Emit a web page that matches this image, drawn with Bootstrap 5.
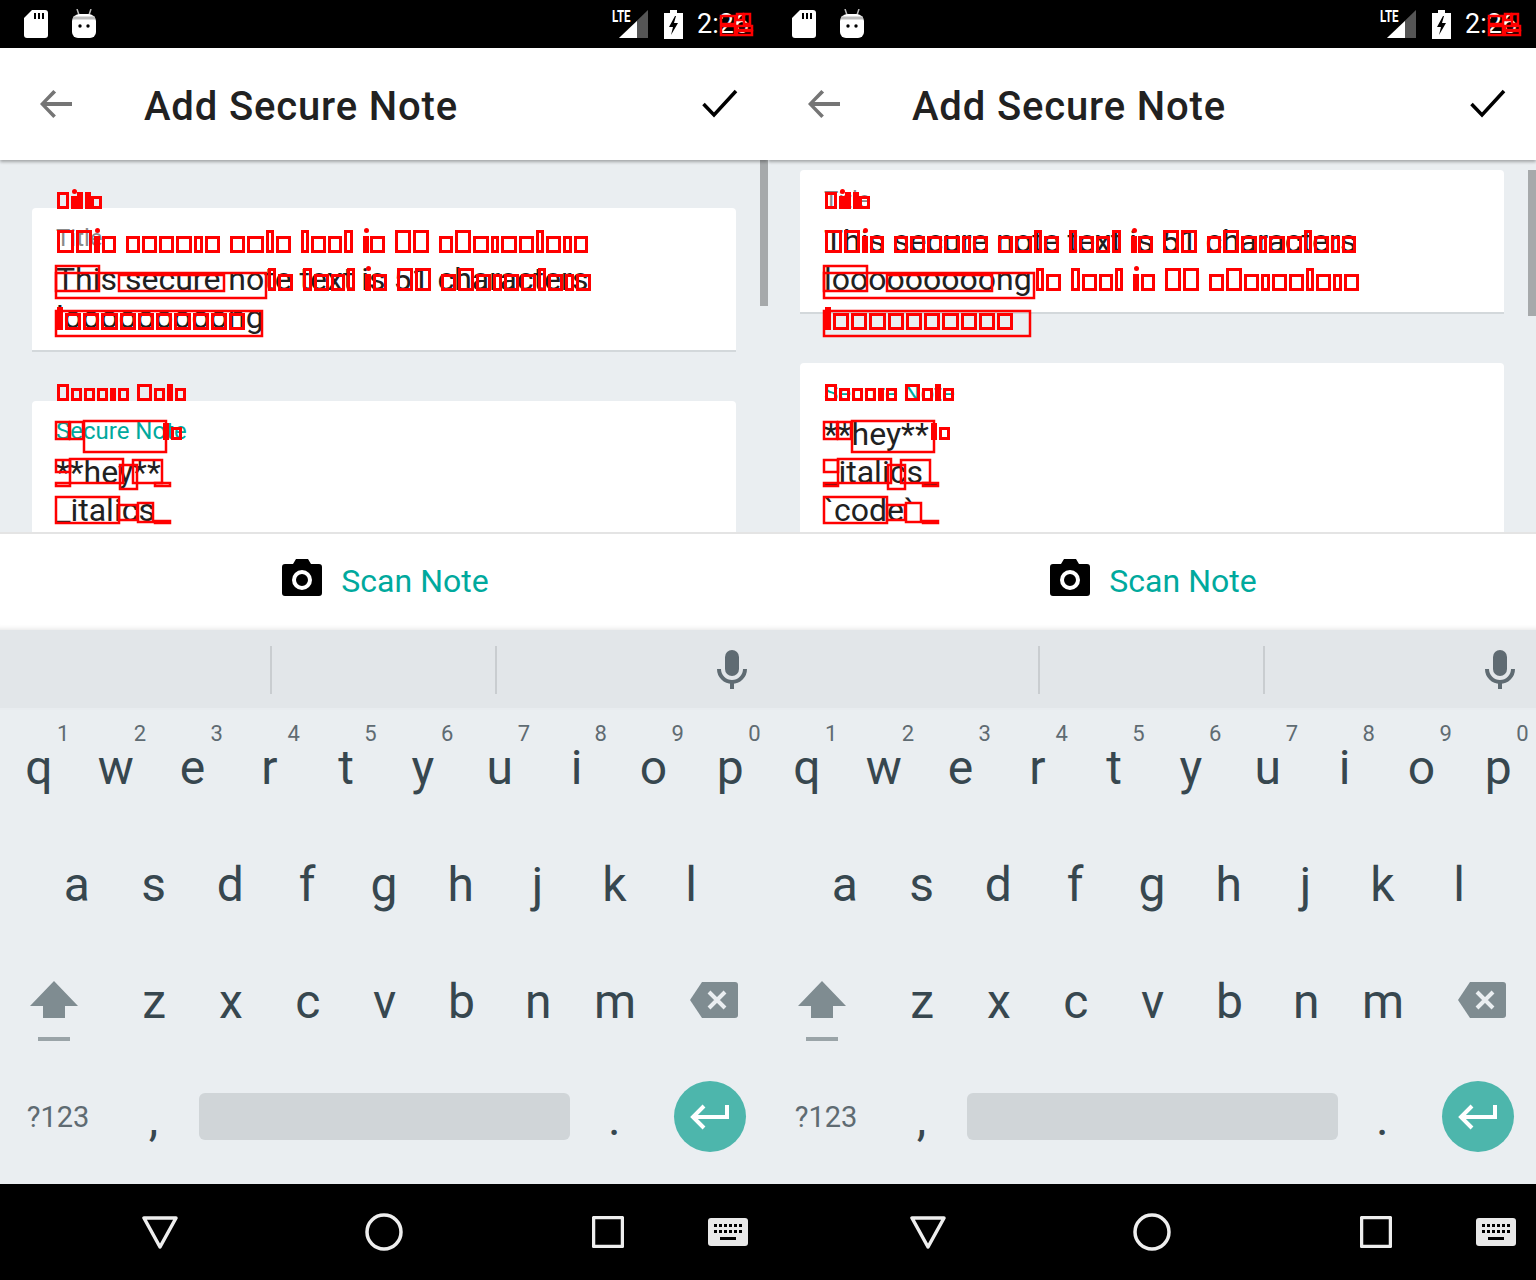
<!DOCTYPE html>
<html lang="en">
<head>
    <meta charset="UTF-8">
    <meta name="viewport" content="width=device-width, initial-scale=1.0">
    <title>Add Secure Note</title>
    <link href="https://cdn.jsdelivr.net/npm/bootstrap@5.3.2/dist/css/bootstrap.min.css" rel="stylesheet">
    <script src="https://cdn.jsdelivr.net/npm/bootstrap@5.3.2/dist/js/bootstrap.bundle.min.js"></script>
    <style>
        body { margin: 0; background: #000; font-family: Roboto, "Liberation Sans", sans-serif; }
        .phone-row { width: 1536px; height: 1280px; overflow: hidden; }
        .phone { width: 768px; height: 1280px; position: relative; overflow: hidden; background: #eaeef1; }

        .status-strip { height: 48px; background: #000; color: #fff; padding: 0 16px 0 24px; }
        .status-time { font-size: 27px; line-height: 48px; width: 55px; white-space: nowrap; margin-left: 14px; }
        .battery-icon { margin-left: 16px; }
        .lte-mark { position: absolute; left: 612px; top: 8px; font-size: 16px; line-height: 18px; font-weight: 700; color: #fff; transform: scaleX(.72); transform-origin: left; }

        .app-strip { height: 112px; background: #fff; padding: 0 30px 0 40px; box-shadow: 0 2px 3px rgba(0, 0, 0, .3); position: relative; z-index: 2; }
        .app-title { font-size: 40px; font-weight: 500; color: #212121; margin: 6px 0 0 72px; line-height: 48px; letter-spacing: .85px; }

        .note-scroll { height: 372px; overflow: hidden; position: relative; }
        .note-scroll.at-top { padding-top: 48px; }
        .note-scroll.scrolled { padding-top: 10px; }
        .note-card { margin: 0 32px 49px; height: 144px; border: 0; border-radius: 4px 4px 0 0; border-bottom: 2px solid #d3d8db; padding: 17px 24px 0; overflow: visible; }
        .note-card.tall { height: 200px; }
        .note-hint { font-size: 24px; line-height: 26px; margin-bottom: 9px; color: #8a8a8a; }
        .note-hint.active { color: #00a99d; }
        .note-body { font-size: 32px; line-height: 38px; color: #212121; white-space: nowrap; }
        .scroll-thumb { position: absolute; right: 0; width: 8px; height: 146px; background: #a6a9ab; }
        .at-top .scroll-thumb { top: 0; }
        .scrolled .scroll-thumb { top: 10px; }

        .scan-strip { height: 98px; background: #fff; border-top: 2px solid #e4e4e4; position: relative; z-index: 2; color: #00a99d; font-size: 32px; box-shadow: inset 0 -6px 5px -5px rgba(0, 0, 0, .1); padding: 0 0 10px 3px; }
        .scan-strip svg { margin-right: 19px; }
        .scan-label { margin-top: 8px; }

        .suggest-strip { height: 80px; background: #e2e6e9; border-bottom: 2px solid #e8ecef; position: relative; }
        .suggest-rule { position: absolute; top: 16px; width: 2px; height: 48px; background: #c9cdd0; }
        .rule-a { left: 270px; }
        .rule-b { left: 495px; }
        .mic-icon { left: 717px; top: 20px; }
        .kb-row { height: 117px; padding-left: .6px; }
        .kb-row.second { padding: 0 38.4px; }
        .kb-key { flex: 0 0 76.8px; width: 76.8px; height: 100%; position: relative; color: #37474f; font-size: 48px; line-height: 116px; text-align: center; }
        .kb-key sup { position: absolute; top: 13px; right: 8px; font-size: 22px; line-height: 22px; color: #5f6b72; }
        .kb-wide { flex: 0 0 115.2px; width: 115.2px; height: 100%; }
        .shift-cell { padding-top: 37px; margin-left: -4px; margin-right: 4px; }
        .del-cell { padding-top: 38px; margin-left: 3px; margin-right: -3px; }
        .kb-last { height: 124px; }
        .sym-key { font-size: 29px; color: #5f6b72; line-height: 112px; text-align: center; padding-left: 1px; }
        .space-bar { flex: 0 0 384px; padding: 32px 6px 0 7px; }
        .space-bar div { height: 47px; background: #d0d5d8; border-radius: 6px; }
        .enter-ball { width: 72px; height: 71px; border-radius: 50%; background: #4db6ac; margin: 20px 0 0 21px; }

        .nav-strip { position: absolute; left: 0; right: 0; bottom: 0; height: 96px; background: #000; }
        .nav-strip svg { position: absolute; }
        .nav-back { left: 142px; top: 32px; }
        .nav-home { left: 365px; top: 29px; }
        .nav-recent { left: 592px; top: 32px; }
        .nav-keys { left: 708px; top: 34px; }

        /* red glyph boxes lying over the text in the reference */
        .glyph-layer { position: absolute; inset: 0; z-index: 3; pointer-events: none; }
        .glyph-layer svg { position: absolute; inset: 0; }
        .glyph-line { position: absolute; white-space: pre; line-height: 1; color: transparent; }
        .gl { display: inline-block; position: relative; }
        .gl::after { content: ""; position: absolute; left: 1px; right: 1px; bottom: .16em; height: .54em; border: 3px solid #f00; }
        .gl.tall::after { height: .72em; }
        .gl.dot::before { content: ""; position: absolute; left: 25%; width: 5px; height: 5px; bottom: .8em; border-radius: 50%; background: #f00; }
        .gl.blank::after { display: none; }
    </style>
</head>
<body>
    <div class="phone-row d-flex">
        <div class="phone d-flex flex-column" data-scroll="at-top"></div>
        <div class="phone d-flex flex-column" data-scroll="scrolled"></div>
    </div>

    <template id="phoneBody">
        <div class="status-strip d-flex align-items-center flex-shrink-0">
            <svg width="24" height="28" viewBox="0 0 24 28"><path d="M8 0h13a3 3 0 0 1 3 3v22a3 3 0 0 1-3 3H3a3 3 0 0 1-3-3V8z" fill="#fff"/><path d="M10 3h2v6h-2zM14 3h2v6h-2zM18 3h2v6h-2z" fill="#000"/></svg>
            <svg class="ms-4" width="24" height="30" viewBox="0 0 24 30"><path d="M5 0l2 6h10l2-6" fill="none" stroke="#bbb" stroke-width="1.5"/><path d="M0 12a8 7 0 0 1 8-7h8a8 7 0 0 1 8 7v11a6 6 0 0 1-6 6H6a6 6 0 0 1-6-6z" fill="#fff"/><path d="M1 9h22" stroke="#bbb" stroke-width="3"/><circle cx="8" cy="17" r="1.7" fill="#000"/><circle cx="16" cy="17" r="1.7" fill="#000"/></svg>
            <span class="lte-mark">LTE</span>
            <svg class="ms-auto" width="29" height="28" viewBox="0 0 29 28"><path d="M29 0v28H0z" fill="#555"/><path d="M18 11v17H0z" fill="#fff"/></svg>
            <svg class="battery-icon" width="19" height="29" viewBox="0 0 19 29"><path d="M6 0h7v3h6v26H0V3h6z" fill="#fff"/><path d="M11 6l-6 11h4l-2 8 7-12h-4l2-7z" fill="#000"/></svg>
            <span class="status-time">2:26</span>
        </div>
        <div class="app-strip d-flex align-items-center flex-shrink-0">
            <svg width="32" height="32" viewBox="0 0 32 32"><path d="M32 14H6.500l9.600-9.600L13.300 2 0 16l13.300 14 2.600-2.400L6.500 18H32z" fill="#757575"/></svg>
            <span class="app-title">Add Secure Note</span>
            <svg class="ms-auto" width="36" height="30" viewBox="0 0 36 30"><path d="M1.500 15l10.500 11L34 2" fill="none" stroke="#000" stroke-width="3.500"/></svg>
        </div>
        <div class="note-scroll flex-shrink-0">
            <div class="card note-card">
                <div class="note-hint">Title</div>
                <div class="note-body">This secure note text is 51 characters</div>
                <div class="note-body">looooooooong</div>
            </div>
            <div class="card note-card tall">
                <div class="note-hint active">Secure Note</div>
                <div class="note-body">**hey**</div>
                <div class="note-body">_italics_</div>
                <div class="note-body">`code`</div>
            </div>
            <div class="scroll-thumb"></div>
        </div>
        <div class="scan-strip d-flex align-items-center justify-content-center flex-shrink-0">
            <svg width="40" height="37" viewBox="0 0 40 37"><path d="M3 5h8l3-5h12l3 5h8a3 3 0 0 1 3 3v26a3 3 0 0 1-3 3H3a3 3 0 0 1-3-3V8a3 3 0 0 1 3-3z" fill="#000"/><circle cx="20" cy="21" r="8" fill="none" stroke="#fff" stroke-width="4"/></svg>
            <span class="scan-label">Scan Note</span>
        </div>
        <div class="suggest-strip flex-shrink-0">
            <div class="suggest-rule rule-a"></div>
            <div class="suggest-rule rule-b"></div>
            <svg class="position-absolute mic-icon" width="30" height="40" viewBox="0 0 30 40"><rect x="8" y="0" width="14" height="26" rx="7" fill="#5f6b72"/><path d="M2 19a13 13 0 0 0 26 0" fill="none" stroke="#5f6b72" stroke-width="4"/><path d="M15 30v9" stroke="#5f6b72" stroke-width="4"/></svg>
        </div>
        <div class="keys flex-shrink-0"></div>
        <div class="nav-strip">
            <svg class="nav-back" width="36" height="34" viewBox="0 0 36 34"><path d="M2 2h32L18 31z" fill="none" stroke="#eee" stroke-width="3.500" stroke-linejoin="round"/></svg>
            <svg class="nav-home" width="38" height="38" viewBox="0 0 38 38"><circle cx="19" cy="19" r="17" fill="none" stroke="#eee" stroke-width="3.500"/></svg>
            <svg class="nav-recent" width="32" height="32" viewBox="0 0 32 32"><rect x="1.500" y="1.500" width="29" height="29" rx="1" fill="none" stroke="#eee" stroke-width="3.500"/></svg>
            <svg class="nav-keys" width="40" height="28" viewBox="0 0 40 28"><rect width="40" height="28" rx="3" fill="#e8e8e8"/><path d="M6 6h3v3H6zM11 6h3v3h-3zM16 6h3v3h-3zM21 6h3v3h-3zM26 6h3v3h-3zM31 6h3v3h-3zM6 12h3v3H6zM11 12h3v3h-3zM16 12h3v3h-3zM21 12h3v3h-3zM26 12h3v3h-3zM31 12h3v3h-3zM12 19h16v3H12z" fill="#000"/></svg>
        </div>
        <div class="glyph-layer"></div>
    </template>

    <script>
        const upperRow = 'qwertyuiop';
        const iconShift = '<svg width="48" height="62" viewBox="0 0 48 62"><path d="M24 0l24 25H35v12H13V25H0z" fill="#7f8c91"/><path d="M8 58h32" stroke="#9aa4a8" stroke-width="4"/></svg>';
        const iconDelete = '<svg width="48" height="36" viewBox="0 0 48 36"><path d="M12 0h33a3 3 0 0 1 3 3v30a3 3 0 0 1-3 3H12L0 18z" fill="#7f8c91"/><path d="M19 10l16 16M35 10L19 26" stroke="#eaeef1" stroke-width="4"/></svg>';
        const iconEnter = '<svg width="40" height="28" viewBox="0 0 40 28"><path d="M37 2v12H5M14 3L3 14l11 11" fill="none" stroke="#fff" stroke-width="4"/></svg>';

        function keyRow(letters, withHints) {
            return [...letters].map((ch, i) => {
                const hint = withHints ? `<sup>${(i + 1) % 10}</sup>` : '';
                return `<div class="kb-key">${ch}${hint}</div>`;
            }).join('');
        }

        function buildKeys() {
            return `
                <div class="kb-row d-flex">${keyRow(upperRow, true)}</div>
                <div class="kb-row second d-flex">${keyRow('asdfghjkl', false)}</div>
                <div class="kb-row d-flex">
                    <div class="kb-wide d-flex justify-content-center shift-cell">${iconShift}</div>
                    ${keyRow('zxcvbnm', false)}
                    <div class="kb-wide d-flex justify-content-center del-cell">${iconDelete}</div>
                </div>
                <div class="kb-last d-flex">
                    <div class="kb-wide sym-key">?123</div>
                    <div class="kb-key">,</div>
                    <div class="space-bar"><div></div></div>
                    <div class="kb-key">.</div>
                    <div class="kb-wide"><div class="enter-ball d-flex align-items-center justify-content-center">${iconEnter}</div></div>
                </div>`;
        }

        // [x, baseline, font size, text]
        const glyphLines = [
            [56, 209, 24, 'Title'],
            [56, 253, 32, 'This secure note text is 51 characters'],
            [267, 291, 32, 'te text is 51 characters'],
            [56, 330, 32, 'looooooooon'],
            [56, 401, 24, 'Secure Note'],
            [162, 440, 24, 'te']
        ];
        // [x, y, w, h]
        const glyphRects = [
            [56, 266, 43, 25], [56, 273, 210, 25], [119, 275, 105, 16],
            [56, 311, 206, 25],
            [56, 422, 13, 17], [70, 422, 13, 17], [84, 421, 82, 31],
            [56, 460, 14, 12], [70, 459, 53, 24], [120, 465, 17, 24], [133, 460, 29, 23],
            [56, 483, 14, 3], [155, 483, 15, 3],
            [56, 497, 63, 26], [119, 505, 18, 15], [138, 503, 15, 19], [155, 521, 15, 2],
            [721, 16, 14, 8], [721, 26, 14, 9], [737, 14, 6, 6], [744, 14, 6, 10], [737, 26, 15, 4], [737, 31, 15, 4]
        ];

        function glyphClass(ch) {
            if (ch === ' ') return 'gl blank';
            if (ch === 'i') return 'gl dot';
            return /[A-Z0-9bdfhklt]/.test(ch) ? 'gl tall' : 'gl';
        }

        function fillGlyphLayer(layer) {
            glyphLines.forEach(([x, base, size, text]) => {
                const line = document.createElement('div');
                line.className = 'glyph-line';
                line.style.left = x + 'px';
                line.style.top = (base - size * 0.84) + 'px';
                line.style.fontSize = size + 'px';
                [...text].forEach(ch => {
                    const cell = document.createElement('span');
                    cell.className = glyphClass(ch);
                    cell.textContent = ch;
                    line.appendChild(cell);
                });
                layer.appendChild(line);
            });
            const rects = glyphRects.map(([x, y, w, h]) =>
                `<rect x="${x}" y="${y}" width="${w}" height="${h}" fill="none" stroke="#f00" stroke-width="2.500"/>`).join('');
            layer.insertAdjacentHTML('beforeend', `<svg width="768" height="1280">${rects}</svg>`);
        }

        document.querySelectorAll('.phone').forEach(phone => {
            phone.appendChild(document.getElementById('phoneBody').content.cloneNode(true));
            phone.querySelector('.note-scroll').classList.add(phone.dataset.scroll);
            phone.querySelector('.keys').innerHTML = buildKeys();
            fillGlyphLayer(phone.querySelector('.glyph-layer'));
        });
    </script>
</body>
</html>
